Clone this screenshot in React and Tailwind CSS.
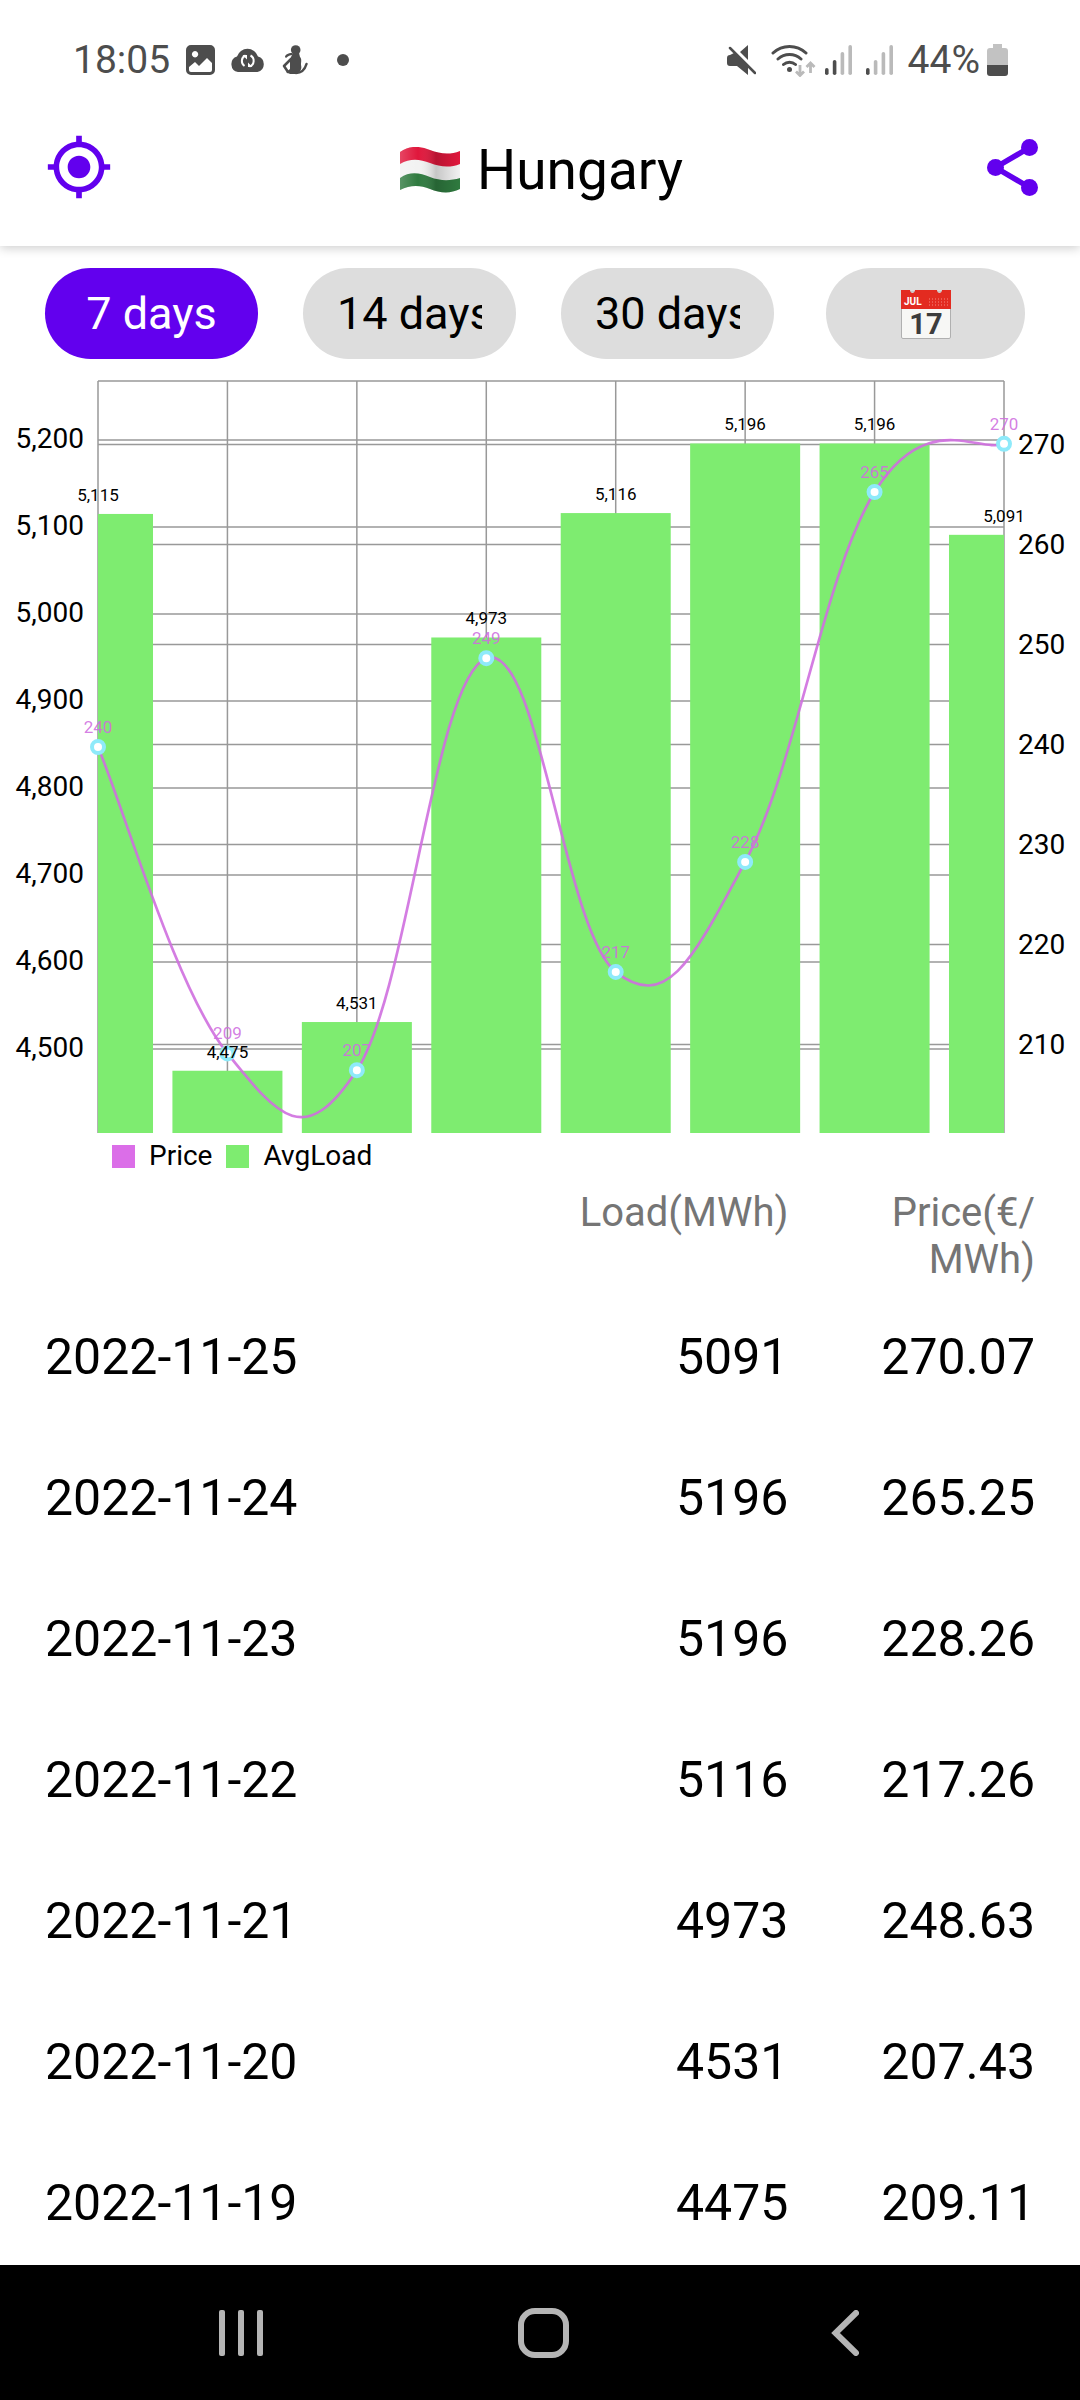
import React, { useState } from "react";
import { MdGpsFixed } from "react-icons/md";

const days = [
  { date: "2022-11-18", load: 5115, price: 239.75 },
  { date: "2022-11-19", load: 4475, price: 209.11 },
  { date: "2022-11-20", load: 4531, price: 207.43 },
  { date: "2022-11-21", load: 4973, price: 248.63 },
  { date: "2022-11-22", load: 5116, price: 217.26 },
  { date: "2022-11-23", load: 5196, price: 228.26 },
  { date: "2022-11-24", load: 5196, price: 265.25 },
  { date: "2022-11-25", load: 5091, price: 270.07 },
];

const ranges = ["7 days", "14 days", "30 days"];

// Chart geometry, in viewBox units
const LEFT = 98;
const RIGHT = 1004;
const TOP = 8;
const BOTTOM = 760;
const STEP = (RIGHT - LEFT) / (days.length - 1);
const BAR = STEP * 0.85;

const xAt = (i) => LEFT + i * STEP;
const loadY = (v) => 676 - (v - 4500) * 0.87;
const priceY = (v) => 671.5 - (v - 210) * 10;

const loadTicks = [5200, 5100, 5000, 4900, 4800, 4700, 4600, 4500];
const priceTicks = [270, 260, 250, 240, 230, 220, 210];

// Cubic line, each control point follows the neighbours by 20%
const buildLine = () => {
  const p = days.map((d, i) => [xAt(i), priceY(d.price)]);
  let path = `M${p[0][0]} ${p[0][1]}`;
  for (let i = 1; i < p.length; i++) {
    const before = p[Math.max(i - 2, 0)];
    const prev = p[i - 1];
    const cur = p[i];
    const next = p[Math.min(i + 1, p.length - 1)];
    path += ` C${prev[0] + (cur[0] - before[0]) * 0.2} ${prev[1] + (cur[1] - before[1]) * 0.2}`;
    path += ` ${cur[0] - (next[0] - prev[0]) * 0.2} ${cur[1] - (next[1] - prev[1]) * 0.2}`;
    path += ` ${cur[0]} ${cur[1]}`;
  }
  return path;
};

function Signal({ level }) {
  return (
    <svg width="27" height="30" viewBox="0 0 27 30">
      {[7, 15, 23, 30].map((h, i) => (
        <rect key={h} x={i * 7.8} y={30 - h} width="3.6" height={h} rx="1.8" fill={i < level ? "#4d4d4d" : "#bababa"} />
      ))}
    </svg>
  );
}

function StatusBar() {
  return (
    <div className="flex h-[120px] items-center justify-between pl-[73px] pr-[72px] text-[39px] text-[#4d4d4d]">
      <div className="flex items-center">
        <span>18:05</span>
        <svg className="ml-4" width="29" height="30" viewBox="0 0 29 30">
          <path
            fillRule="evenodd"
            fill="currentColor"
            d="M5 0h19a5 5 0 0 1 5 5v20a5 5 0 0 1-5 5H5a5 5 0 0 1-5-5V5a5 5 0 0 1 5-5zM9 6a3.200 3.200 0 1 0 .1 0zM3 22v3a2 2 0 0 0 2 2h19a2 2 0 0 0 2-2v-7l-5-5-8 8-4-4z"
          />
        </svg>
        <svg className="ml-[15px]" width="35" height="24" viewBox="0 0 35 24">
          <path fill="currentColor" d="M8 24a8 8 0 0 1-1-15.500A11 11 0 0 1 28 8.500 8 8 0 0 1 27.500 24z" />
          <g fill="none" stroke="#fff" strokeWidth="2">
            <path d="M15.500 7.500a6 6 0 0 0-1 10.500M19.500 18.500a6 6 0 0 0 1-11" />
          </g>
          <path fill="#fff" d="M12.500 7h4.500v4.500zM22.500 19H18v-4.500z" />
        </svg>
        <svg className="ml-[17px]" width="26" height="30" viewBox="0 0 26 30">
          <g fill="currentColor">
            <circle cx="13.700" cy="5" r="4.800" />
            <path d="M3 12c0-2 3-4 7-4l1 2c-3 0-5 1-7 3z" />
            <path d="M11 8h6l1 4c2 2 1 5 1 8 1 3 0 7-5 9H8l-4-2 4-3V14z" />
          </g>
          <path fill="none" stroke="currentColor" strokeWidth="2.500" strokeLinecap="round" strokeLinejoin="round" d="M9 14l-7 7 4 6M14 28c6 0 9-4 10.500-9" />
        </svg>
        <span className="ml-[29px] h-3 w-3 rounded-full bg-[#4d4d4d]" />
      </div>
      <div className="flex items-center">
        <svg width="29" height="30" viewBox="0 0 29 30">
          <path fill="currentColor" d="M21 0v15L13 7zM7 8l14 14v8L10 21H3c-2 0-3-1-3-3v-5c0-2 1-3 3-3z" />
          <path d="M3 3l25 25" stroke="currentColor" strokeWidth="2.500" strokeLinecap="round" />
        </svg>
        <svg className="ml-[15px]" width="45" height="33" viewBox="0 0 45 33">
          <g fill="none" stroke="#4d4d4d" strokeWidth="3" strokeLinecap="round">
            <path d="M2 9a24 24 0 0 1 33 0M7 15a17 17 0 0 1 23 0M12.500 20.500a9 9 0 0 1 12 0" />
          </g>
          <circle cx="18.500" cy="25.500" r="2.500" fill="#4d4d4d" />
          <path d="M29 21v10M25 27.500l4 4 4-4M39.500 29V19.500M35.500 23l4-4 4 4" fill="none" stroke="#bababa" strokeWidth="2.800" />
        </svg>
        <div className="ml-[9px] flex gap-[14px]">
          <Signal level={2} />
          <Signal level={1} />
        </div>
        <span className="ml-[15px]">44%</span>
        <svg className="ml-[7px]" width="21" height="32" viewBox="0 0 21 32">
          <path fill="#c2c2c2" d="M6 0h9v4h3a3 3 0 0 1 3 3v14H0V7a3 3 0 0 1 3-3h3z" />
          <path fill="#4d4d4d" d="M0 21h21v8a3 3 0 0 1-3 3H3a3 3 0 0 1-3-3z" />
        </svg>
      </div>
    </div>
  );
}

function Flag() {
  return (
    <svg width="60" height="46" viewBox="0 0 60 46" aria-hidden="true">
      <defs>
        <clipPath id="flag">
          <path d="M0 5C10-2 20-1 30 3s20 5 30 1v38c-10 5-20 4-30 0S10 38 0 43z" />
        </clipPath>
        <linearGradient id="fold">
          <stop offset="0" stopColor="#fff" stopOpacity=".2" />
          <stop offset=".3" stopColor="#fff" stopOpacity="0" />
          <stop offset=".6" stopColor="#000" stopOpacity=".18" />
          <stop offset="1" stopColor="#000" stopOpacity="0" />
        </linearGradient>
      </defs>
      <g clipPath="url(#flag)">
        <path fill="#f2f2f2" d="M0 0h60v46H0z" />
        <path fill="#e0173c" d="M0 0h60v17c-10 4-20 3-30-1s-20-5-30 1z" />
        <path fill="#2f7a3f" d="M0 31c10-7 20-5 30-1s20 4 30 1v15H0z" />
        <path fill="url(#fold)" d="M0 0h60v46H0z" />
      </g>
    </svg>
  );
}

function Calendar() {
  return (
    <svg width="50" height="50" viewBox="0 0 50 50" aria-hidden="true">
      <rect x=".5" y="3" width="49" height="46.500" rx="1.500" fill="#f7f7f5" stroke="#b0b0b0" />
      <path d="M0 1h9c0 4 5 4 5 0h22c0 4 5 4 5 0h9v19H0z" fill="#e32b20" />
      <path d="M28 10h20M28 13h20M28 16h20" stroke="#f58a80" strokeDasharray="1 2" />
      <text x="3" y="16" fontSize="10" fontWeight="700" fill="#fff">JUL</text>
      <text x="25" y="45" fontSize="29" fontWeight="700" textAnchor="middle" fill="#3c3c3c">17</text>
    </svg>
  );
}

function Chart() {
  return (
    <svg className="block w-full" viewBox="0 0 1080 762" role="img" aria-label="Price and average load">
      {/* Grid */}
      <g stroke="#999999" strokeWidth="1.500">
        {days.map((d, i) => (
          <path key={d.date} d={`M${xAt(i)} ${TOP}V${BOTTOM}`} />
        ))}
        {loadTicks.map((t) => (
          <path key={t} d={`M${LEFT} ${loadY(t)}H${RIGHT}`} />
        ))}
        {priceTicks.map((t) => (
          <path key={t} d={`M${LEFT} ${priceY(t)}H${RIGHT}`} />
        ))}
        <path d={`M${LEFT} ${TOP}H${RIGHT}`} />
      </g>

      {/* Bars */}
      {days.map((d, i) => {
        const x1 = Math.max(xAt(i) - BAR / 2, LEFT);
        const x2 = Math.min(xAt(i) + BAR / 2, RIGHT);
        return <rect key={d.date} x={x1} y={loadY(d.load)} width={x2 - x1} height={BOTTOM - loadY(d.load)} fill="#7eec70" />;
      })}

      {/* Price line */}
      <path d={buildLine()} fill="none" stroke="#cf6fdf" strokeOpacity=".9" strokeWidth="2.700" />
      {days.map((d, i) => (
        <circle key={d.date} cx={xAt(i)} cy={priceY(d.price)} r="6" fill="#fff" stroke="#8eeafa" strokeWidth="4" />
      ))}

      {/* Values */}
      <g fontSize="17" textAnchor="middle">
        {days.map((d, i) => (
          <g key={d.date}>
            <text x={xAt(i)} y={priceY(d.price) - 14} fill="#cf6fdf" fillOpacity=".9">{Math.round(d.price)}</text>
            <text x={xAt(i)} y={loadY(d.load) - 13}>{d.load.toLocaleString("en-US")}</text>
          </g>
        ))}
      </g>

      {/* Axis labels */}
      <g fontSize="28">
        {loadTicks.map((t) => (
          <text key={t} x="84" y={loadY(t) + 8} textAnchor="end">{t.toLocaleString("en-US")}</text>
        ))}
        {priceTicks.map((t) => (
          <text key={t} x="1018" y={priceY(t) + 9}>{t}</text>
        ))}
      </g>
    </svg>
  );
}

function App() {
  const [range, setRange] = useState("7 days");
  const rows = days.slice(1).reverse();

  return (
    <div className="flex h-screen flex-col overflow-hidden bg-white font-['Roboto',sans-serif] text-black">
      <header className="relative z-10 shrink-0 bg-white shadow-[0_2px_10px_rgba(0,0,0,0.2)]">
        <StatusBar />
        <div className="flex h-[126px] justify-between pl-[45px] pr-[42px]">
          <button aria-label="My location" className="mt-[13px] h-[68px] w-[68px] text-[#6200ee]">
            <MdGpsFixed size={68} />
          </button>
          <h1 className="flex h-[100px] items-center gap-[17px] text-[55px]">
            <Flag />
            Hungary
          </h1>
          <button aria-label="Share" className="mt-[13px] flex h-[68px] w-[68px] items-center justify-end">
            <svg width="51" height="57" viewBox="0 0 51 57" fill="#6200ee">
              <path d="M42.500 8.500l-34 20 34 20" fill="none" stroke="#6200ee" strokeWidth="5.500" />
              <circle cx="8.500" cy="28.500" r="8.500" />
              <circle cx="42.500" cy="8.500" r="8.500" />
              <circle cx="42.500" cy="48.500" r="8.500" />
            </svg>
          </button>
        </div>
      </header>

      <main className="min-h-0 flex-1 overflow-hidden">
        {/* Range picker */}
        <div className="grid grid-cols-[258fr_258fr_258fr_306fr] pt-[22px] text-[45px]">
          {ranges.map((r) => (
            <div key={r} className="min-w-0 pl-[45px]">
              <button
                onClick={() => setRange(r)}
                className={`flex h-[91px] w-full items-center rounded-full px-[34px] ${
                  range === r ? "bg-[#6200ee] text-white" : "bg-[#dddddd] text-black"
                }`}
              >
                <span className="w-full overflow-hidden whitespace-nowrap text-center">{r}</span>
              </button>
            </div>
          ))}
          <div className="min-w-0 pl-[52px] pr-[55px]">
            <button aria-label="Pick dates" className="flex h-[91px] w-full items-center justify-center rounded-full bg-[#dddddd]">
              <Calendar />
            </button>
          </div>
        </div>

        <div className="pt-[14px]">
          <Chart />
        </div>

        <div className="flex items-center pl-[112px] pt-[5px] text-[28px] leading-[32px]">
          <span className="h-[23px] w-[23px] bg-[#db6ee8]" />
          <span className="ml-[14px]">Price</span>
          <span className="ml-[14px] h-[23px] w-[23px] bg-[#7eec70]" />
          <span className="ml-[14px]">AvgLoad</span>
        </div>

        <table className="w-full table-fixed">
          <thead>
            <tr className="h-[115px] align-top text-[40px] leading-[47px] text-[#757575]">
              <th className="w-[38%]"></th>
              <th className="pt-[17px] text-right font-normal">Load(MWh)</th>
              <th className="w-[27%] pl-[45px] pr-[45px] pt-[17px] text-right font-normal">
                Price(€/<wbr />MWh)
              </th>
            </tr>
          </thead>
          <tbody className="text-[50px]">
            {rows.map((d) => (
              <tr key={d.date} className="h-[141px]">
                <td className="whitespace-nowrap pl-[45px]">{d.date}</td>
                <td className="text-right">{d.load}</td>
                <td className="pr-[45px] text-right">{d.price.toFixed(2)}</td>
              </tr>
            ))}
          </tbody>
        </table>
      </main>

      <nav className="grid h-[135px] shrink-0 grid-cols-3 place-items-center bg-black pl-[90px] pr-[84px] text-[#b5b5b5]">
        <button aria-label="Recents">
          <svg width="45" height="46" viewBox="0 0 45 46" fill="currentColor">
            <rect width="6" height="46" rx="2" />
            <rect x="19" width="6" height="46" rx="2" />
            <rect x="38" width="6" height="46" rx="2" />
          </svg>
        </button>
        <button aria-label="Home">
          <svg width="51" height="50" viewBox="0 0 51 50">
            <rect x="3" y="3" width="45" height="44" rx="14" fill="none" stroke="currentColor" strokeWidth="6" />
          </svg>
        </button>
        <button aria-label="Back">
          <svg width="28" height="46" viewBox="0 0 28 46">
            <path d="M25 3L4.500 23 25 43" fill="none" stroke="currentColor" strokeWidth="6" strokeLinecap="round" />
          </svg>
        </button>
      </nav>
    </div>
  );
}

export default App;
